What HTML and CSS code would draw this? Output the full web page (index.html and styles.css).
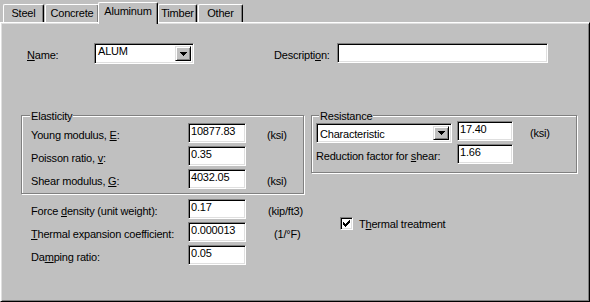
FILE: index.html
```html
<!DOCTYPE html>
<html>
<head>
<meta charset="utf-8">
<link rel="stylesheet" href="styles.css">
</head>
<body>
<div class="tabs">
  <div class="tab t-steel">Steel</div>
  <div class="tab t-concrete">Concrete</div>
  <div class="tab t-alu active">Aluminum</div>
  <div class="tab t-timber">Timber</div>
  <div class="tab t-other">Other</div>
</div>
<div class="panel">
  <div class="row-top">
    <span class="lbl lbl-name"><u>N</u>ame:</span>
    <div class="combo combo-name">
      <span class="ctext ctext-name">ALUM</span>
      <span class="dd"><svg width="7" height="4" shape-rendering="crispEdges"><rect x="0" y="0" width="7" height="1"/><rect x="1" y="1" width="5" height="1"/><rect x="2" y="2" width="3" height="1"/><rect x="3" y="3" width="1" height="1"/></svg></span>
    </div>
    <span class="lbl lbl-desc">Descripti<u>o</u>n:</span>
    <div class="edit desc"></div>
  </div>

  <div class="groups">
    <div class="group g-elast">
      <span class="gtitle">Elasticity</span>
      <div class="frow">
        <span class="lbl flabel">Young modulus, <u>E</u>:</span>
        <div class="edit num">10877.83</div>
        <span class="lbl unit u-ksi">(ksi)</span>
      </div>
      <div class="frow">
        <span class="lbl flabel">Poisson ratio, <u>v</u>:</span>
        <div class="edit num">0.35</div>
      </div>
      <div class="frow">
        <span class="lbl flabel">Shear modulus, <u>G</u>:</span>
        <div class="edit num">4032.05</div>
        <span class="lbl unit u-ksi">(ksi)</span>
      </div>
    </div>
    <div class="group g-resist">
      <span class="gtitle gtitle-r">Resistance</span>
      <div class="frow">
        <div class="combo combo-char">
          <span class="ctext">Characteristic</span>
          <span class="dd"><svg width="7" height="4" shape-rendering="crispEdges"><rect x="0" y="0" width="7" height="1"/><rect x="1" y="1" width="5" height="1"/><rect x="2" y="2" width="3" height="1"/><rect x="3" y="3" width="1" height="1"/></svg></span>
        </div>
        <div class="edit rnum">17.40</div>
        <span class="lbl unit u-rksi">(ksi)</span>
      </div>
      <div class="frow">
        <span class="lbl rlabel">Reduction factor for <u>s</u>hear:</span>
        <div class="edit rnum">1.66</div>
      </div>
    </div>
  </div>

  <div class="bottom">
    <div class="bcol">
      <div class="frow">
        <span class="lbl flabel">Force <u>d</u>ensity (unit weight):</span>
        <div class="edit num">0.17</div>
        <span class="lbl unit u-kip">(kip/ft3)</span>
      </div>
      <div class="frow">
        <span class="lbl flabel"><u>T</u>hermal expansion coefficient:</span>
        <div class="edit num">0.000013</div>
        <span class="lbl unit u-f">(1/°F)</span>
      </div>
      <div class="frow">
        <span class="lbl flabel">Da<u>m</u>ping ratio:</span>
        <div class="edit num">0.05</div>
      </div>
    </div>
    <div class="check">
      <span class="cbox"><svg width="7" height="7" shape-rendering="crispEdges"><rect x="6" y="0" width="1" height="1"/><rect x="5" y="1" width="2" height="1"/><rect x="0" y="2" width="1" height="1"/><rect x="4" y="2" width="3" height="1"/><rect x="0" y="3" width="2" height="1"/><rect x="3" y="3" width="3" height="1"/><rect x="0" y="4" width="5" height="1"/><rect x="1" y="5" width="3" height="1"/><rect x="2" y="6" width="1" height="1"/></svg></span>
      <span class="lbl clabel">T<u>h</u>ermal treatment</span>
    </div>
  </div>
</div>
</body>
</html>
```

FILE: styles.css
```css
* { box-sizing: border-box; }
html, body { margin: 0; padding: 0; }
body {
  background: #c0c0c0;
  font-family: "Liberation Sans", Arial, sans-serif;
  font-size: 11px;
  letter-spacing: -0.2px;
  line-height: 13px;
  color: #000;
  width: 590px;
  height: 302px;
  overflow: hidden;
}
u { text-decoration: underline; text-underline-offset: 1px; }

/* tabs */
.tabs {
  display: flex;
  align-items: flex-start;
  height: 22px;
  padding-left: 3px;
}
.tab {
  margin-top: 4px;
  margin-right: 1px;
  height: 18px;
  padding-top: 2px;
  text-align: center;
  border-top: 1px solid #fff;
  border-left: 1px solid #fff;
  border-right: 1px solid #000;
  border-radius: 2px 2px 0 0;
  box-shadow: inset -1px 0 #808080;
  background: #c0c0c0;
}
.t-steel { width: 41px; }
.t-concrete { width: 54px; }
.t-alu { width: 60px; }
.t-timber { width: 39px; }
.t-other { width: 45px; }
.tab.active {
  position: relative;
  z-index: 1;
  margin-top: 2px;
  margin-left: -2px;
  margin-right: 0;
  height: 22px;
}

/* panel */
.panel {
  height: 280px;
  border: 1px solid;
  border-color: #fff #000 #000 #fff;
  box-shadow: inset 1px 1px #dfdfdf, inset -1px -1px #808080;
  padding: 20px 0 0 20px;
}

/* controls */
.lbl { padding-top: 6px; white-space: nowrap; }
.edit {
  background: #fff;
  border: 1px solid;
  border-color: #808080 #fff #fff #808080;
  box-shadow: inset 1px 1px #000, inset -1px -1px #dfdfdf;
  padding: 1px 0 0 2px;
  height: 20px;
  white-space: nowrap;
}
.combo {
  display: flex;
  background: #fff;
  border: 1px solid;
  border-color: #808080 #fff #fff #808080;
  box-shadow: inset 1px 1px #000, inset -1px -1px #dfdfdf;
  padding: 2px;
}
.ctext { flex: 1; padding-left: 1px; }
.dd {
  width: 16px;
  display: flex;
  align-items: center;
  justify-content: center;
  border: 1px solid;
  border-color: #dfdfdf #000 #000 #dfdfdf;
  box-shadow: inset 1px 1px #fff, inset -1px -1px #808080;
  background: #c0c0c0;
}
.dd svg { display: block; }

.row-top { display: flex; margin-left: 6px; height: 21px; }
.lbl-name { width: 67px; }
.combo-name { width: 100px; height: 21px; }
.ctext-name { margin-top: -1px; }
.lbl-desc { margin-left: 80px; width: 63px; }
.desc { width: 211px; }

.groups { display: flex; margin-top: 51px; }
.group {
  position: relative;
  border: 1px solid #808080;
  box-shadow: inset 1px 1px #fff, 1px 1px #fff;
}
.gtitle {
  position: absolute;
  top: -6px;
  left: 8px;
  padding: 0 1px;
  background: #c0c0c0;
}
.gtitle-r { left: 7px; }
.g-elast { width: 283px; height: 79px; padding: 7px 0 0 9px; }
.g-resist { width: 266px; height: 58px; margin-left: 7px; padding: 5px 0 0 4px; }

.frow { display: flex; height: 20px; margin-bottom: 3px; }
.flabel { width: 157px; }
.num { width: 58px; }
.unit { margin-left: 21px; }
.u-kip { margin-left: 22px; }
.u-f { margin-left: 28px; }

.combo-char { width: 136px; height: 20px; margin-top: 2px; }
.combo-char .ctext { padding-top: 2px; }
.rnum { width: 56px; margin-left: 5px; }
.u-rksi { margin-left: 17px; }
.rlabel { width: 136px; }

.bottom { display: flex; margin-top: 5px; margin-left: 10px; }
.bcol { width: 309px; }
.check { display: flex; align-items: flex-start; margin-top: 18px; }
.cbox {
  width: 13px;
  height: 13px;
  display: flex;
  align-items: center;
  justify-content: center;
  background: #fff;
  border: 1px solid;
  border-color: #808080 #fff #fff #808080;
  box-shadow: inset 1px 1px #000, inset -1px -1px #dfdfdf;
}
.cbox svg { display: block; }
.clabel { padding-top: 0; margin-top: 1px; margin-left: 6px; }
```
